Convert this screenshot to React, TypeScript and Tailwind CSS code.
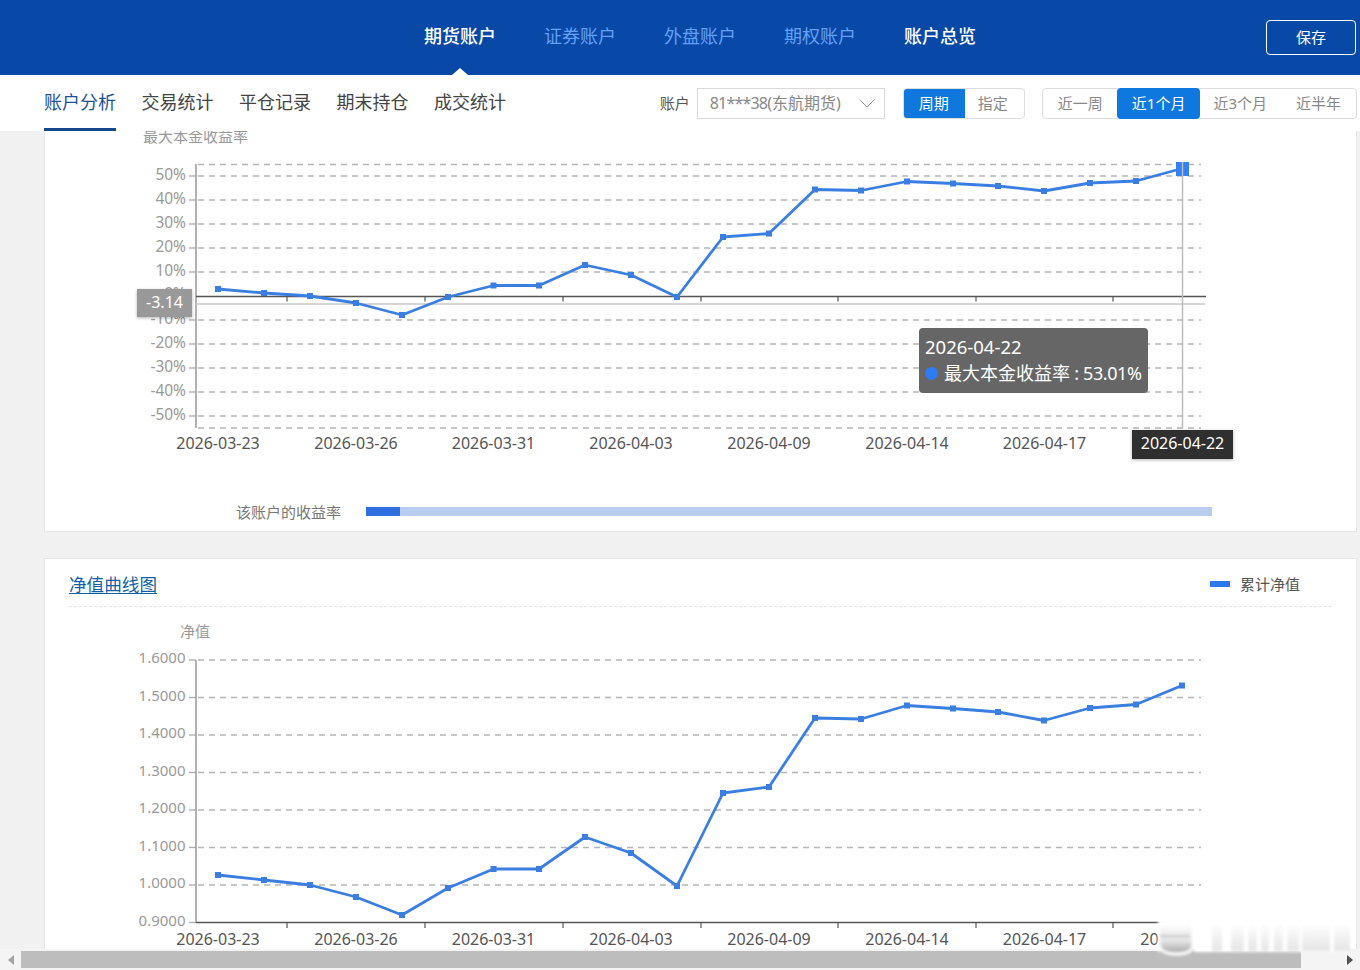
import React from 'react';

const xs = [218, 264, 310, 356, 402, 448, 493.5, 539, 585, 631, 677, 723, 769, 815, 861, 907, 953, 998, 1044, 1090, 1136, 1182];
const yieldY = [289, 293, 296, 303, 315, 297, 285.5, 285.5, 265, 275, 297, 237, 233.5, 189.5, 190.5, 181.5, 183.5, 186, 191, 183, 181, 168.5];
const netY = [875, 880, 885, 897, 915, 888, 869, 869, 837, 853, 886, 793, 787, 718, 719, 705.5, 708.5, 712, 720.5, 708, 704.5, 685.5];
const dates = ['2026-03-23', '2026-03-26', '2026-03-31', '2026-04-03', '2026-04-09', '2026-04-14', '2026-04-17', '2026-04-22'];
const labelXs = [218, 356, 493.5, 631, 769, 907, 1044.5, 1182];
const ticks = [287, 425, 563, 701, 838, 976, 1113];

const BLUE = '#3b7ee2';

const Series: React.FC<{ ys: number[]; last?: boolean }> = ({ ys, last }) => (
  <g>
    <polyline points={xs.map((x, i) => `${x},${ys[i]}`).join(' ')} fill="none" stroke={BLUE} strokeWidth="2.8" strokeLinejoin="round" />
    {xs.map((x, i) => (
      <rect key={x} x={x - 3} y={ys[i] - 3} width="6" height="6" fill={BLUE} />
    ))}
    {last && <rect x="1176" y="162" width="13" height="14" fill="#3580f2" />}
  </g>
);

const GridLine: React.FC<{ y: number }> = ({ y }) => (
  <g>
    <line x1="189" x2="196" y1={y} y2={y} stroke="#aaa" strokeWidth="1.3" />
    <line x1="198" x2="1201" y1={y} y2={y} stroke="#b5b5b5" strokeWidth="1.5" strokeDasharray="6 5" />
  </g>
);

const YieldChart = () => {
  const rows: [number, string][] = [
    [176, '50%'], [200, '40%'], [224, '30%'], [248, '20%'], [272, '10%'], [320, '-10%'],
    [344, '-20%'], [368, '-30%'], [392, '-40%'], [416, '-50%'],
  ];
  return (
    <svg viewBox="45 131 1311 360" className="block h-[360px] w-[1311px]">
      <text x="143" y="142" fontSize="15" fill="#999">最大本金收益率</text>
      <line x1="198" x2="1201" y1="164.5" y2="164.5" stroke="#b5b5b5" strokeWidth="1.5" strokeDasharray="6 5" />
      <line x1="198" x2="1201" y1="428" y2="428" stroke="#b5b5b5" strokeWidth="1.5" strokeDasharray="6 5" />
      {rows.map(([y, t]) => (
        <g key={t}>
          <GridLine y={y} />
          <text x="186" y={y + 4} fontSize="15.5" fill="#999" textAnchor="end">{t}</text>
        </g>
      ))}
      <text x="186" y="299" fontSize="15.5" fill="#999" textAnchor="end">0%</text>
      <line x1="196" x2="196" y1="164" y2="428" stroke="#999" strokeWidth="1.5" />
      <line x1="196" x2="1206" y1="296.5" y2="296.5" stroke="#555" strokeWidth="1.5" />
      {ticks.map((x) => (
        <line key={x} x1={x} x2={x} y1="296" y2="301.5" stroke="#555" strokeWidth="1.2" />
      ))}
      <line x1="196" x2="1205" y1="304" y2="304" stroke="#c8c8c8" strokeWidth="1.6" />
      <Series ys={yieldY} last />
      <line x1="1182.5" x2="1182.5" y1="162" y2="428" stroke="#bbb" strokeWidth="1.5" />
      {dates.slice(0, 7).map((d, i) => (
        <text key={d} x={labelXs[i]} y="449" fontSize="16" fill="#555" textAnchor="middle">{d}</text>
      ))}
    </svg>
  );
};

const NetChart = () => {
  const rows: [number, string][] = [
    [660, '1.6000'], [697.5, '1.5000'], [735, '1.4000'], [772.5, '1.3000'], [810, '1.2000'], [847.5, '1.1000'], [885, '1.0000'],
  ];
  return (
    <svg viewBox="45 607 1311 344" className="block h-[344px] w-[1311px]">
      <text x="180" y="637" fontSize="15" fill="#999">净值</text>
      {rows.map(([y, t]) => (
        <g key={t}>
          <GridLine y={y} />
          <text x="185.5" y={y + 3} fontSize="15" fill="#999" textAnchor="end">{t}</text>
        </g>
      ))}
      <text x="185.5" y="926" fontSize="15" fill="#999" textAnchor="end">0.9000</text>
      <line x1="189" x2="196" y1="922.5" y2="922.5" stroke="#aaa" strokeWidth="1.3" />
      <line x1="196" x2="196" y1="660" y2="923" stroke="#999" strokeWidth="1.5" />
      <line x1="196" x2="1206" y1="922.5" y2="922.5" stroke="#555" strokeWidth="1.6" />
      {ticks.map((x) => (
        <line key={x} x1={x} x2={x} y1="922" y2="928" stroke="#555" strokeWidth="1.2" />
      ))}
      <Series ys={netY} />
      {dates.map((d, i) => (
        <text key={d} x={labelXs[i]} y="945" fontSize="16" fill="#555" textAnchor="middle">{d}</text>
      ))}
    </svg>
  );
};

// blurred image-host watermark in the bottom right corner
const Watermark = () => (
  <svg viewBox="0 0 210 50" className="absolute left-[1150px] top-[910px] h-[50px] w-[210px]">
    <defs>
      <filter id="wm" x="-20%" y="-20%" width="140%" height="140%">
        <feGaussianBlur stdDeviation="1.4" />
      </filter>
      <linearGradient id="wmFade" x1="0" y1="0" x2="0" y2="1">
        <stop offset="0" stopColor="#fff" />
        <stop offset="1" stopColor="#e4e4e4" />
      </linearGradient>
      <linearGradient id="wmCup" x1="0" y1="0" x2="0" y2="1">
        <stop offset="0" stopColor="#fff" />
        <stop offset="0.6" stopColor="#e2e2e2" />
        <stop offset="1" stopColor="#a8a8a8" />
      </linearGradient>
    </defs>
    <g filter="url(#wm)">
      <rect x="8" y="9" width="192" height="33" fill="#fff" />
      <rect x="10" y="14" width="34" height="29" fill="url(#wmCup)" />
      <rect x="10" y="25" width="30" height="2" fill="#c4c4c4" />
      <path d="M9 30 V36 Q12 44 26 44 Q42 44 43 36 V6" fill="none" stroke="#fff" strokeWidth="3" />
      <rect x="62" y="14" width="138" height="27" fill="url(#wmFade)" />
      {[[72, 9], [94, 4], [107, 4], [119, 5], [133, 4], [149, 3], [180, 4]].map(([x, w]) => (
        <rect key={x} x={x} y="12" width={w} height="30" fill="#fff" />
      ))}
    </g>
  </svg>
);

export default function App() {
  const nav = [
    { label: '期货账户', active: true },
    { label: '证券账户' },
    { label: '外盘账户' },
    { label: '期权账户' },
    { label: '账户总览', white: true },
  ];
  return (
    <div className="relative flex h-[970px] w-[1360px] flex-col overflow-hidden bg-[#f1f1f1] font-['Noto_Sans','Noto_Sans_CJK_SC',sans-serif]">
      <header className="flex h-[75px] shrink-0 items-center bg-[#0848a6] pl-[424px] pr-[4px]">
        <nav className="flex h-full gap-12">
          {nav.map((n) => (
            <div
              key={n.label}
              className={`relative flex h-full items-center pb-1 text-lg ${n.active || n.white ? 'font-medium text-white' : 'text-[#64a0f5]'}`}
            >
              {n.label}
              {n.active && (
                <span className="absolute bottom-0 left-1/2 -translate-x-1/2 border-x-8 border-b-[7px] border-x-transparent border-b-white" />
              )}
            </div>
          ))}
        </nav>
        <button className="ml-auto h-[35px] w-[90px] rounded border border-white text-[15px] text-white">保存</button>
      </header>

      <div className="flex h-14 shrink-0 items-center bg-white pl-[44px] pr-[3px]">
        <div className="flex h-full gap-[25.5px]">
          <div className="flex h-full items-center border-b-[3px] border-[#15498f] text-lg text-[#1b5296]">账户分析</div>
          {['交易统计', '平仓记录', '期末持仓', '成交统计'].map((t) => (
            <div key={t} className="flex h-full items-center pb-[3px] text-lg text-[#444]">{t}</div>
          ))}
        </div>
        <div className="ml-auto flex items-center">
          <span className="mr-[7px] text-[15px] text-[#555]">账户</span>
          <div className="flex h-[31px] w-[188px] items-center justify-between border border-[#d9d9d9] pl-3 pr-[9px] text-base text-[#888]">
            <span><span className="tracking-[-0.8px]">81***38</span>(东航期货)</span>
            <svg viewBox="0 0 16 9" className="h-[9px] w-4" fill="none" stroke="#999" strokeWidth="1">
              <polyline points="0.5,0.5 8,8 15.5,0.5" />
            </svg>
          </div>
          <div className="ml-[18px] flex h-[31px] overflow-hidden rounded border border-[#ddd] text-[15px]">
            <div className="-my-px -ml-px flex items-center bg-[#0f78de] px-4 text-white">周期</div>
            <div className="flex items-center pl-[13px] pr-4 text-[#888]">指定</div>
          </div>
          <div className="ml-[17px] flex h-[31px] rounded border border-[#ddd] text-[15px] text-[#888]">
            <div className="flex items-center pl-[15px] pr-[14px]">近一周</div>
            <div className="-my-px flex items-center rounded bg-[#0f78de] px-[15px] text-white">近1个月</div>
            <div className="flex items-center pl-[13px] pr-[14px]">近3个月</div>
            <div className="flex items-center px-[15px]">近半年</div>
          </div>
        </div>
      </div>

      <main className="flex min-h-0 flex-1 flex-col gap-[26px] overflow-hidden pl-[44px] pr-[3px]">
        <section className="relative h-[401px] shrink-0 border border-t-0 border-[#e6e6e6] bg-white">
          <YieldChart />
          <div className="flex h-[40px] items-center pl-[191px] text-[15px] text-[#777]">
            <span className="mt-0.5 w-[130px]">该账户的收益率</span>
            <div className="flex h-[9px] w-[846px] bg-[#b9cdf0]">
              <div className="w-[34px] bg-[#2f6fe0]" />
            </div>
          </div>
          <div className="absolute left-[92px] top-[158px] flex h-[28px] w-[55px] items-center justify-center bg-[#999] pb-0.5 text-base text-white shadow-[0_1px_3px_rgba(0,0,0,0.3)]">-3.14</div>
          <div className="absolute left-[874px] top-[197px] h-[65px] w-[229px] rounded bg-[#666] px-[6px] pt-[6px] text-lg leading-[26px] text-white">
            <div className="text-[18.5px]">2026-04-22</div>
            <div className="flex items-center whitespace-nowrap">
              <span className="mr-[6px] h-[13px] w-[13px] shrink-0 rounded-full bg-[#2f7bf6]" />
              最大本金收益率<span className="tracking-[-0.4px]">&nbsp;: 53.01%</span>
            </div>
          </div>
          <div className="absolute left-[1087px] top-[299px] flex h-[29px] w-[101px] items-center justify-center bg-[#2f2f2f] pb-1 text-base text-white shadow-[0_1px_3px_rgba(0,0,0,0.3)]">2026-04-22</div>
        </section>

        <section className="h-[420px] shrink-0 border border-[#e6e6e6] bg-white">
          <div className="mx-6 flex h-[48px] items-center justify-between border-b border-dashed border-[#e3e3e3] pr-8 pt-[3px]">
            <span className="text-[17.6px] text-[#135fa5] underline underline-offset-2">净值曲线图</span>
            <div className="flex items-center gap-[10px] text-[15px] text-[#555]">
              <span className="h-[6px] w-5 bg-[#2f78e8]" />
              累计净值
            </div>
          </div>
          <NetChart />
        </section>
      </main>

      <div className="flex h-[21px] shrink-0 items-center bg-[#f4f4f4]">
        <div className="flex w-[21px] justify-center">
          <span className="border-y-[5px] border-r-[6px] border-y-transparent border-r-[#a3a3a3]" />
        </div>
        <div className="h-[17px] w-[1280px] bg-[#bdbdbd]" />
        <div className="flex flex-1 justify-end pr-[7px]">
          <span className="border-y-[5px] border-l-[6px] border-y-transparent border-l-[#505050]" />
        </div>
      </div>

      <Watermark />
    </div>
  );
}
